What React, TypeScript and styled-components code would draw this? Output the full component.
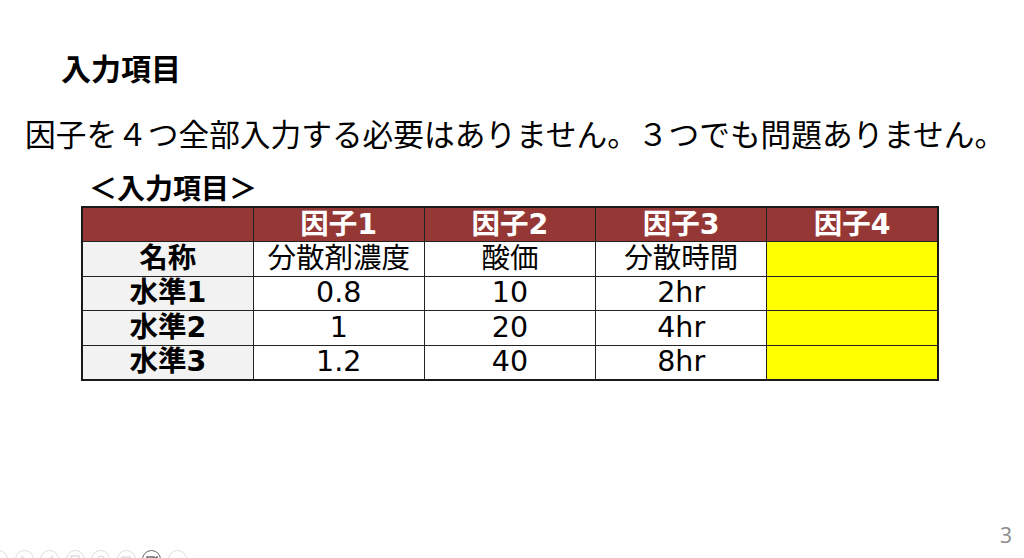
import React from "react";
import styled, { createGlobalStyle } from "styled-components";

const Global = createGlobalStyle`
  html, body { margin: 0; padding: 0; background: #ffffff; }
  #root { width: 1024px; height: 558px; }
`;

const JP = `"DejaVu Sans", "Noto Sans CJK JP", sans-serif`;

const Slide = styled.div`
  position: relative;
  width: 1024px;
  height: 558px;
  overflow: hidden;
  background: #fff;
  display: flex;
  flex-direction: column;
  font-family: ${JP};
  color: #000;
`;

const Title = styled.h1`
  margin: 50px 0 0 61px;
  font-size: 30px;
  line-height: 34px;
  font-weight: 700;
  font-family: "Noto Sans CJK JP", sans-serif;
`;

const Body = styled.p`
  margin: 32px 0 0 25px;
  font-size: 30.7px;
  line-height: 40px;
  font-weight: 400;
  white-space: nowrap;
`;

const SubHeading = styled.h2`
  margin: 15px 0 0 89px;
  font-size: 28px;
  line-height: 32px;
  font-weight: 700;
  font-family: "Noto Sans CJK JP", sans-serif;
`;

const Table = styled.table`
  margin: 3px 0 0 81px;
  width: 858px;
  border-collapse: collapse;
  table-layout: fixed;
  border: 2px solid #1a1a1a;
`;

type CellKind = "head" | "label" | "data" | "empty";

const Cell = styled.td<{ $kind: CellKind }>`
  height: 33.4px;
  padding: 0;
  border: 1px solid #222;
  text-align: center;
  vertical-align: middle;
  font-size: 28.5px;
  line-height: 30px;
  white-space: nowrap;
  overflow: visible;
  background: ${(p) =>
    p.$kind === "head"
      ? "#953735"
      : p.$kind === "label"
      ? "#f2f2f2"
      : p.$kind === "empty"
      ? "#ffff00"
      : "#ffffff"};
  color: ${(p) => (p.$kind === "head" ? "#ffffff" : "#000000")};
  font-weight: ${(p) => (p.$kind === "head" || p.$kind === "label" ? 700 : 400)};
`;

const Footer = styled.div`
  margin-top: auto;
  display: flex;
  justify-content: flex-end;
  padding: 0 12px 13px 0;
`;

const PageNum = styled.span`
  font-family: "Open Sans", "DejaVu Sans", sans-serif;
  font-size: 21px;
  line-height: 20px;
  color: #8c8c8c;
`;

const Toolbar = styled.div`
  position: absolute;
  left: -11px;
  top: 550px;
  display: flex;
  gap: 6.5px;
`;

const ToolBtn = styled.div<{ $active?: boolean }>`
  width: 19px;
  height: 19px;
  border-radius: 50%;
  border: 1px solid ${(p) => (p.$active ? "#6a6a6a" : "#dedede")};
  display: flex;
  align-items: center;
  justify-content: center;
  box-sizing: border-box;
`;

const heads = ["", "因子1", "因子2", "因子3", "因子4"];
const rows: [string, string, string, string][] = [
  ["名称", "分散剤濃度", "酸価", "分散時間"],
  ["水準1", "0.8", "10", "2hr"],
  ["水準2", "1", "20", "4hr"],
  ["水準3", "1.2", "40", "8hr"],
];

const ToolIcon: React.FC<{ i: number; active?: boolean }> = ({ i, active }) => {
  const c = active ? "#555" : "#d6d6d6";
  const icons: React.ReactNode[] = [
    <path key="a" d="M5 9 L12 9" stroke={c} strokeWidth="1.2" fill="none" />,
    <path key="b" d="M6 5 L12 9 L6 13" stroke={c} strokeWidth="1.2" fill="none" />,
    <path key="c" d="M5 12 L12 5" stroke={c} strokeWidth="1.2" fill="none" />,
    <rect key="d" x="5" y="5" width="8" height="6" stroke={c} strokeWidth="1.2" fill="none" />,
    <circle key="e" cx="9" cy="8" r="3" stroke={c} strokeWidth="1.2" fill="none" />,
    <rect key="f" x="5" y="6" width="8" height="6" stroke={c} strokeWidth="1.2" fill="none" />,
    <g key="g">
      <rect x="4" y="6" width="7" height="6" stroke={c} strokeWidth="1.3" fill="none" />
      <path d="M11 8 L14 6 L14 12 L11 10" stroke={c} strokeWidth="1.3" fill="none" />
    </g>,
    <path key="h" d="M5 9 L13 9" stroke={c} strokeWidth="1.2" fill="none" />,
  ];
  return (
    <ToolBtn $active={active}>
      <svg width="16" height="16" viewBox="1 1 16 16">
        {icons[i]}
      </svg>
    </ToolBtn>
  );
};

export default function App() {
  return (
    <>
      <Global />
      <Slide>
        <Title>入力項目</Title>
        <Body>因子を４つ全部入力する必要はありません。３つでも問題ありません。</Body>
        <SubHeading>＜入力項目＞</SubHeading>
        <Table>
          <tbody>
            <tr>
              {heads.map((h, i) => (
                <Cell as="th" key={i} $kind="head">
                  {h}
                </Cell>
              ))}
            </tr>
            {rows.map((r) => (
              <tr key={r[0]}>
                <Cell $kind="label">{r[0]}</Cell>
                <Cell $kind="data">{r[1]}</Cell>
                <Cell $kind="data">{r[2]}</Cell>
                <Cell $kind="data">{r[3]}</Cell>
                <Cell $kind="empty" />
              </tr>
            ))}
          </tbody>
        </Table>
        <Footer>
          <PageNum>3</PageNum>
        </Footer>
        <Toolbar>
          {Array.from({ length: 8 }).map((_, i) => (
            <ToolIcon key={i} i={i} active={i === 6} />
          ))}
        </Toolbar>
      </Slide>
    </>
  );
}
